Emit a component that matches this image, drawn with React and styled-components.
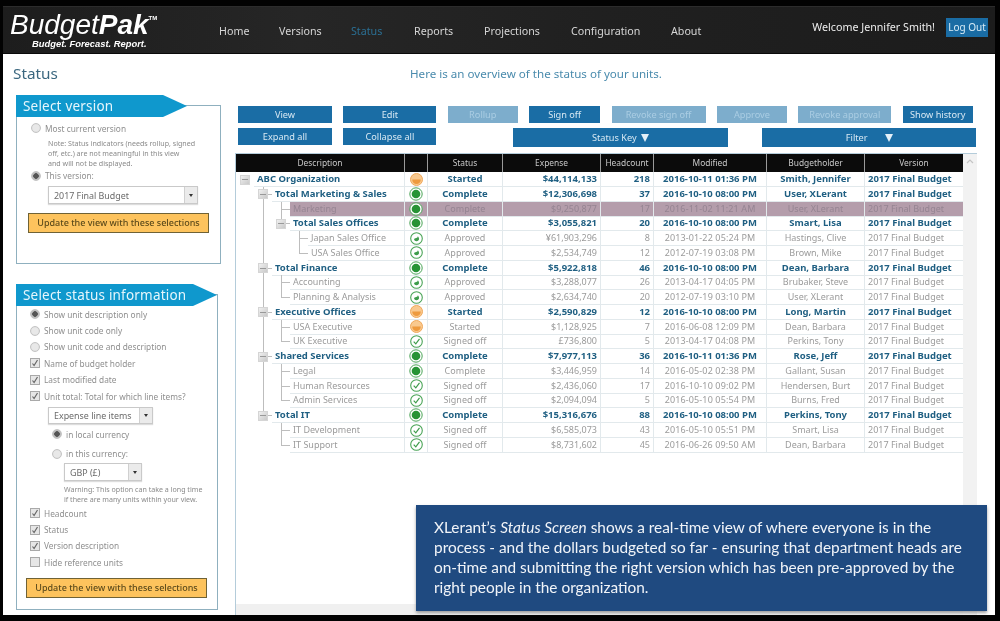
import React from "react";
import styled, { createGlobalStyle } from "styled-components";

const Global = createGlobalStyle`
  html, body { margin: 0; padding: 0; background: #000; }
  * { box-sizing: border-box; }
`;

const UI = `"Noto Sans", "Open Sans", sans-serif`;

const Screen = styled.div`
  position: relative;
  width: 1000px;
  height: 621px;
  overflow: hidden;
  background: #020202;
  padding: 6px 5px 6px 3px;
  font-family: ${UI};
  filter: blur(0.3px);
`;
const Page = styled.div`
  height: 100%;
  display: flex;
  flex-direction: column;
  background: #fff;
`;
const Header = styled.header`
  height: 48px;
  flex: none;
  display: flex;
  background: linear-gradient(90deg, #1d1d1d, #262626 30%, #202020 60%, #1c1c1c);
  border-top: 1px solid #2c2c2c;
  border-bottom: 1px solid #0a0a0a;
  color: #ddd;
`;
const Logo = styled.div`
  width: 216px;
  flex: none;
  padding: 4px 0 0 7px;
  color: #fff;
  font-family: "Liberation Sans", Arial, sans-serif;
  font-style: italic;
`;
const LogoMark = styled.div`
  font-size: 28px;
  line-height: 27px;
  b { font-weight: 700; }
  sup { font-size: 6px; font-style: normal; font-weight: 700; vertical-align: 14px; line-height: 0; }
`;
const LogoTag = styled.div`
  font-size: 9.4px;
  font-weight: 700;
  line-height: 12px;
  padding-left: 22px;
`;
const Nav = styled.nav`
  display: flex;
  align-items: center;
  height: 100%;
  padding-top: 2px;
`;
const NavItem = styled.a`
  font-size: 10.7px;
  width: ${(p) => p.$w}px;
  flex: none;
  color: ${(p) => (p.$active ? "#2b6f93" : "#d6d6d6")};
`;
const Welcome = styled.div`
  margin-left: auto;
  display: flex;
  align-items: flex-start;
  padding: 11px 7px 0 0;
  font-size: 10.7px;
  color: #eee;
  gap: 11px;
  line-height: 19px;
`;
const LogOut = styled.button`
  all: unset;
  width: 42px;
  height: 19px;
  background: #1a6ca4;
  color: #d9ecf7;
  font-size: 10px;
  text-align: center;
  line-height: 19px;
`;

const TitleRow = styled.div`
  height: 40px;
  flex: none;
  display: flex;
  align-items: center;
  padding: 0 0 2px 10px;
`;
const PageTitle = styled.h1`
  margin: 0;
  width: 390px;
  font-size: 15.3px;
  font-weight: 400;
  color: #3b677f;
`;
const Overview = styled.div`
  padding-left: 7px;
  font-size: 11.6px;
  color: #4a8bad;
`;

const Content = styled.div`
  flex: 1;
  min-height: 0;
  display: flex;
`;
const Sidebar = styled.aside`
  width: 232px;
  flex: none;
  padding-left: 13px;
  display: flex;
  flex-direction: column;
`;
const Panel = styled.section`
  width: ${(p) => p.$w}px;
  height: ${(p) => p.$h}px;
  margin-top: ${(p) => p.$top}px;
  border: 1px solid #8fb0bf;
`;
const Ribbon = styled.h2`
  margin: -11px 0 0 -1px;
  width: ${(p) => p.$w}px;
  height: 22px;
  background: #0f98cd;
  color: #e6f6fc;
  font-size: 13.5px;
  font-weight: 400;
  line-height: 22px;
  padding-left: 7px;
  letter-spacing: 0.2px;
  clip-path: polygon(0 0, calc(100% - 24px) 0, 100% 50%, calc(100% - 24px) 100%, 0 100%);
`;
const Options = styled.div`
  display: flex;
  flex-direction: column;
  padding: ${(p) => p.$pad};
`;
const Option = styled.label`
  height: ${(p) => p.$h || 16.4}px;
  display: flex;
  align-items: center;
  gap: 4px;
  margin-left: ${(p) => p.$indent || 0}px;
  font-size: 8.3px;
  color: #8f8f8f;
  white-space: nowrap;
`;
const Radio = styled.span`
  width: 10px;
  height: 10px;
  flex: none;
  border-radius: 50%;
  background: ${(p) =>
    p.$on
      ? "radial-gradient(circle, #555 0 2.5px, #bbb 3px, #ccc 100%)"
      : "radial-gradient(circle, #e8e8e8 0 3px, #d2d2d2 100%)"};
  border: 1px solid #c4c4c4;
`;
const Check = styled.span`
  width: 10px;
  height: 10px;
  flex: none;
  display: flex;
  align-items: center;
  justify-content: center;
  background: #e6e6e6;
  border: 1px solid #a9a9a9;
`;
const Note = styled.p`
  margin: ${(p) => p.$m};
  font-size: 7.1px;
  line-height: 9.8px;
  color: #8a8a8a;
`;
const Select = styled.div`
  width: ${(p) => p.$w}px;
  height: ${(p) => p.$h || 18}px;
  margin: ${(p) => p.$m};
  display: flex;
  align-items: center;
  justify-content: space-between;
  border: 1px solid #c9c9c9;
  box-shadow: 0 1px 1px #ddd;
  font-size: 8.9px;
  color: #6a6a6a;
  padding-left: 5px;
`;
const SelectArrow = styled.span`
  width: 13px;
  height: 100%;
  display: flex;
  align-items: center;
  justify-content: center;
  background: #ebebeb;
  border-left: 1px solid #d0d0d0;
  color: #333;
  &::after {
    content: "";
    border-left: 2.5px solid transparent;
    border-right: 2.5px solid transparent;
    border-top: 3px solid #333;
  }
`;
const Update = styled.button`
  all: unset;
  display: block;
  box-sizing: border-box;
  width: 181px;
  height: 20px;
  margin: ${(p) => p.$m};
  background: #fdc35d;
  border: 1px solid #6f6236;
  color: #5b4a1b;
  font-size: 9px;
  font-weight: 500;
  text-align: center;
  line-height: 18px;
`;

const Main = styled.main`
  flex: 1;
  min-width: 0;
  display: flex;
  flex-direction: column;
  padding-top: 12px;
`;
const ToolRow = styled.div`
  display: flex;
  gap: 11.4px;
  padding-left: 3px;
  margin-bottom: ${(p) => p.$mb}px;
`;
const Tool = styled.button`
  all: unset;
  box-sizing: border-box;
  flex: none;
  width: ${(p) => p.$w}px;
  height: ${(p) => p.$h || 17}px;
  margin-left: ${(p) => p.$ml || 0}px;
  background: ${(p) => (p.$off ? "#7dadcc" : "#1a6da5")};
  color: ${(p) => (p.$off ? "#aacde3" : "#d7e8f3")};
  font-size: 9.2px;
  text-align: center;
  line-height: ${(p) => (p.$h || 17) + 1}px;
`;
const Tri = styled.span`
  display: inline-block;
  margin-left: ${(p) => p.$ml}px;
  border-left: 4.5px solid transparent;
  border-right: 4.5px solid transparent;
  border-top: 8px solid #e4f0f8;
  vertical-align: -1px;
`;
const GridFrame = styled.div`
  width: 742px;
  height: 462px;
  flex: none;
  display: flex;
  border: 1px solid #b4ccda;
  border-bottom: 0;
`;
const GridBody = styled.div`
  width: 727px;
  flex: none;
  display: flex;
  flex-direction: column;
`;
const cols = "169px 23px 75px 98px 53px 113px 98px 98px";
const HeadRow = styled.div`
  display: grid;
  grid-template-columns: ${cols};
  height: 18px;
  background: #0b0b0b;
`;
const HeadCell = styled.div`
  color: #c9c9c9;
  font-size: 8.4px;
  text-align: center;
  line-height: 18px;
  border-right: 1px solid #9a9a9a;
  &:last-child { border-right: 0; }
`;
const Row = styled.div`
  display: grid;
  grid-template-columns: ${cols};
  height: 14.78px;
  font-size: ${(p) => (p.$bold ? 9.5 : 9)}px;
  line-height: 14px;
  color: ${(p) => (p.$bold ? "#1f5f82" : "#9b9b9b")};
  font-weight: ${(p) => (p.$bold ? 700 : 400)};
`;
const Tree = styled.div`
  display: flex;
  min-width: 0;
`;
const lineColor = "#bdbdbd";
const v = (h, y) => `linear-gradient(${lineColor},${lineColor}) 50% ${y} / 1px ${h} no-repeat`;
const hr = `linear-gradient(${lineColor},${lineColor}) 100% 50% / 50% 1px no-repeat`;
const guides = {
  ".": "none",
  "|": v("100%", "0"),
  T: `${v("100%", "0")}, ${hr}`,
  L: `${v("50%", "0")}, ${hr}`,
};
const Slot = styled.span`
  width: 18px;
  flex: none;
  display: flex;
  align-items: center;
  justify-content: center;
  background: ${(p) => guides[p.$g]};
`;
const Expander = styled.span`
  width: 10px;
  height: 10px;
  display: flex;
  align-items: center;
  justify-content: center;
  background: linear-gradient(135deg, #f0f0f0, #c9c9c9);
  border: 1px solid #d5d5d5;
  &::after { content: ""; width: 6px; height: 1px; background: #999; }
`;
const Label = styled.div`
  flex: 1;
  min-width: 0;
  padding-left: 3px;
  white-space: nowrap;
  overflow: hidden;
  border-bottom: 1px solid #e2e9ec;
  border-right: 1px solid #e2e9ec;
  background: ${(p) => (p.$hi ? "#b49dab" : "transparent")};
  color: ${(p) => (p.$hi ? "#958492" : "inherit")};
`;
const Cell = styled.div`
  border-bottom: 1px solid #e2e9ec;
  border-right: 1px solid #e2e9ec;
  text-align: ${(p) => p.$a || "center"};
  padding: 0 ${(p) => (p.$a === "right" ? 3 : 0)}px 0 ${(p) => (p.$a === "left" ? 3 : 0)}px;
  letter-spacing: ${(p) => p.$sp || 0}px;
  white-space: nowrap;
  overflow: hidden;
  background: ${(p) => (p.$hi ? "#b49dab" : "transparent")};
  color: ${(p) => (p.$hi ? "#958492" : "inherit")};
  &:last-child { border-right: 0; }
`;
const IconCell = styled(Cell)`
  display: flex;
  align-items: center;
  justify-content: center;
`;
const HScroll = styled.div`
  margin-top: auto;
  height: 11px;
  background: #f0f0f0;
`;
const VScroll = styled.div`
  width: 14px;
  flex: none;
  background: #f2f2f2;
  display: flex;
  justify-content: center;
  padding-top: 5px;
`;
const Callout = styled.aside`
  position: absolute;
  left: 416px;
  top: 505px;
  width: 571px;
  height: 106px;
  background: #1f4a80;
  box-shadow: 0 2px 3px rgba(120, 120, 120, 0.7);
  color: #f1f4f8;
  font-family: Lato, "Open Sans", sans-serif;
  font-size: 15.4px;
  line-height: 20px;
  padding: 12px 10px 0 18px;
  em { font-style: italic; }
`;

const StatusIcon = ({ s }) => {
  if (s === "Started")
    return (
      <svg width="13" height="13" viewBox="0 0 13 13">
        <circle cx="6.5" cy="6.5" r="6" fill="#f9c98f" stroke="#efa85a" />
        <path d="M2.2 6.6h8.6a4.3 4.3 0 0 1-8.6 0z" fill="#ee9a3e" />
      </svg>
    );
  if (s === "Complete")
    return (
      <svg width="14" height="14" viewBox="0 0 14 14">
        <circle cx="7" cy="7" r="6.2" fill="#fff" stroke="#4aa457" strokeWidth="1" />
        <circle cx="7" cy="7" r="4.3" fill="#279335" />
      </svg>
    );
  if (s === "Approved")
    return (
      <svg width="13" height="13" viewBox="0 0 13 13">
        <circle cx="6.5" cy="6.5" r="5.8" fill="#fff" stroke="#4aa457" strokeWidth="1.1" />
        <path d="M4 7.2a2.6 2.6 0 0 0 5 .4c.3-1-.2-2.4-1.2-3.4-.1 1.2-.6 1.6-1.6 1.7C5 6 4.4 6.4 4 7.2z" fill="#3e9c4b" />
      </svg>
    );
  return (
    <svg width="13" height="13" viewBox="0 0 13 13">
      <circle cx="6.5" cy="6.5" r="5.8" fill="#fff" stroke="#4aa457" strokeWidth="1.1" />
      <path d="M3.7 6.6l2.1 2.3 3.7-5" fill="none" stroke="#3e9c4b" strokeWidth="1.2" />
    </svg>
  );
};

const Tick = () => (
  <svg width="8" height="8" viewBox="0 0 8 8">
    <path d="M1.5 4.5l1.6 2L6.5 1" fill="none" stroke="#666" strokeWidth="1.2" />
  </svg>
);

const ROWS = [
  ["-", "ABC Organization", "Started", "$44,114,133", "218", "2016-10-11 01:36 PM", "Smith, Jennifer", 1],
  [".-", "Total Marketing & Sales", "Complete", "$12,306,698", "37", "2016-10-10 08:00 PM", "User, XLerant", 1],
  [".|T", "Marketing", "Complete", "$9,250,877", "17", "2016-11-02 11:21 AM", "User, XLerant", 0, 1],
  [".|=", "Total Sales Offices", "Complete", "$3,055,821", "20", "2016-10-10 08:00 PM", "Smart, Lisa", 1],
  [".|.T", "Japan Sales Office", "Approved", "¥61,903,296", "8", "2013-01-22 05:24 PM", "Hastings, Clive", 0],
  [".|.L", "USA Sales Office", "Approved", "$2,534,749", "12", "2012-07-19 03:08 PM", "Brown, Mike", 0],
  [".-", "Total Finance", "Complete", "$5,922,818", "46", "2016-10-10 08:00 PM", "Dean, Barbara", 1],
  [".|T", "Accounting", "Approved", "$3,288,077", "26", "2013-04-17 04:05 PM", "Brubaker, Steve", 0],
  [".|L", "Planning & Analysis", "Approved", "$2,634,740", "20", "2012-07-19 03:10 PM", "User, XLerant", 0],
  [".-", "Executive Offices", "Started", "$2,590,829", "12", "2016-10-10 08:00 PM", "Long, Martin", 1],
  [".|T", "USA Executive", "Started", "$1,128,925", "7", "2016-06-08 12:09 PM", "Dean, Barbara", 0],
  [".|L", "UK Executive", "Signed off", "£736,800", "5", "2013-04-17 04:08 PM", "Perkins, Tony", 0],
  [".-", "Shared Services", "Complete", "$7,977,113", "36", "2016-10-11 01:36 PM", "Rose, Jeff", 1],
  [".|T", "Legal", "Complete", "$3,446,959", "14", "2016-05-02 02:38 PM", "Gallant, Susan", 0],
  [".|T", "Human Resources", "Signed off", "$2,436,060", "17", "2016-10-10 09:02 PM", "Hendersen, Burt", 0],
  [".|L", "Admin Services", "Signed off", "$2,094,094", "5", "2016-05-10 05:54 PM", "Burns, Fred", 0],
  [".+", "Total IT", "Complete", "$15,316,676", "88", "2016-10-10 08:00 PM", "Perkins, Tony", 1],
  ["..T", "IT Development", "Signed off", "$6,585,073", "43", "2016-05-10 05:51 PM", "Smart, Lisa", 0],
  ["..L", "IT Support", "Signed off", "$8,731,602", "45", "2016-06-26 09:50 AM", "Dean, Barbara", 0],
];

const TreeSlots = ({ code }) =>
  [...code].map((c, i) => {
    if (c === "-" && i === 0) return <Slot key={i} $g="."><Expander /></Slot>;
    if (c === "-") return <Slot key={i} $g="T"><Expander /></Slot>;
    if (c === "=" || c === "+") return <Slot key={i} $g="L"><Expander /></Slot>;
    return <Slot key={i} $g={c} />;
  });

const GridRow = ({ r }) => {
  const [code, name, status, exp, hc, mod, holder, bold, hi] = r;
  return (
    <Row $bold={!!bold}>
      <Tree>
        <TreeSlots code={code} />
        <Label $hi={!!hi}>{name}</Label>
      </Tree>
      <IconCell $hi={!!hi}><StatusIcon s={status} /></IconCell>
      <Cell $hi={!!hi}>{status}</Cell>
      <Cell $hi={!!hi} $a="right">{exp}</Cell>
      <Cell $hi={!!hi} $a="right">{hc}</Cell>
      <Cell $hi={!!hi} $sp={bold ? 0 : 0.12}>{mod}</Cell>
      <Cell $hi={!!hi}>{holder}</Cell>
      <Cell $hi={!!hi} $a="left">2017 Final Budget</Cell>
    </Row>
  );
};

export default function App() {
  return (
    <Screen>
      <Global />
      <Page>
        <Header>
          <Logo>
            <LogoMark>Budget<b>Pak</b><sup>TM</sup></LogoMark>
            <LogoTag>Budget. Forecast. Report.</LogoTag>
          </Logo>
          <Nav>
            <NavItem $w={60}>Home</NavItem>
            <NavItem $w={72}>Versions</NavItem>
            <NavItem $w={63} $active>Status</NavItem>
            <NavItem $w={70}>Reports</NavItem>
            <NavItem $w={87}>Projections</NavItem>
            <NavItem $w={100}>Configuration</NavItem>
            <NavItem $w={40}>About</NavItem>
          </Nav>
          <Welcome>
            <span>Welcome Jennifer Smith!</span>
            <LogOut>Log Out</LogOut>
          </Welcome>
        </Header>
        <TitleRow>
          <PageTitle>Status</PageTitle>
          <Overview>Here is an overview of the status of your units.</Overview>
        </TitleRow>
        <Content>
          <Sidebar>
            <Panel $w={205} $h={159} $top={11}>
              <Ribbon $w={171}>Select version</Ribbon>
              <Options $pad="2px 0 0 14px">
                <Option $h={18}><Radio />Most current version</Option>
                <Note $m="2px 0 0 17px">
                  Note: Status indicators (needs rollup, signed<br />
                  off, etc.) are not meaningful in this view<br />
                  and will not be displayed.
                </Note>
                <Option $h={15}><Radio $on />This version:</Option>
                <Select $w={150} $m="3px 0 0 17px">2017 Final Budget<SelectArrow /></Select>
                <Update $m="9px 0 0 -3px">Update the view with these selections</Update>
              </Options>
            </Panel>
            <Panel $w={202} $h={316} $top={30}>
              <Ribbon $w={201}>Select status information</Ribbon>
              <Options $pad="0 0 0 13px">
                <Option><Radio $on />Show unit description only</Option>
                <Option><Radio />Show unit code only</Option>
                <Option><Radio />Show unit code and description</Option>
                <Option><Check><Tick /></Check>Name of budget holder</Option>
                <Option><Check><Tick /></Check>Last modified date</Option>
                <Option><Check><Tick /></Check>Unit total: Total for which line items?</Option>
                <Select $w={105} $h={17} $m="3px 0 0 18px">Expense line items<SelectArrow /></Select>
                <Option $h={20} $indent={22}><Radio $on />in local currency</Option>
                <Option $h={19} $indent={22}><Radio />in this currency:</Option>
                <Select $w={78} $m="0 0 0 34px">GBP (£)<SelectArrow /></Select>
                <Note $m="4px 0 0 34px">
                  Warning: This option can take a long time<br />
                  if there are many units within your view.
                </Note>
                <Option><Check><Tick /></Check>Headcount</Option>
                <Option><Check><Tick /></Check>Status</Option>
                <Option><Check><Tick /></Check>Version description</Option>
                <Option><Check />Hide reference units</Option>
                <Update $m="7px 0 0 -4px">Update the view with these selections</Update>
              </Options>
            </Panel>
          </Sidebar>
          <Main>
            <ToolRow $mb={5}>
              <Tool $w={94}>View</Tool>
              <Tool $w={93}>Edit</Tool>
              <Tool $w={70} $off>Rollup</Tool>
              <Tool $w={71}>Sign off</Tool>
              <Tool $w={94} $off>Revoke sign off</Tool>
              <Tool $w={70} $off>Approve</Tool>
              <Tool $w={93} $off>Revoke approval</Tool>
              <Tool $w={70}>Show history</Tool>
            </ToolRow>
            <ToolRow $mb={6}>
              <Tool $w={94}>Expand all</Tool>
              <Tool $w={93}>Collapse all</Tool>
              <Tool $w={215} $h={19} $ml={65}>Status Key<Tri $ml={4} /></Tool>
              <Tool $w={214} $h={19} $ml={23}>Filter<Tri $ml={17} /></Tool>
            </ToolRow>
            <GridFrame>
              <GridBody>
                <HeadRow>
                  <HeadCell>Description</HeadCell>
                  <HeadCell />
                  <HeadCell>Status</HeadCell>
                  <HeadCell>Expense</HeadCell>
                  <HeadCell>Headcount</HeadCell>
                  <HeadCell>Modified</HeadCell>
                  <HeadCell>Budgetholder</HeadCell>
                  <HeadCell>Version</HeadCell>
                </HeadRow>
                {ROWS.map((r) => <GridRow key={r[1]} r={r} />)}
                <HScroll />
              </GridBody>
              <VScroll>
                <svg width="8" height="5" viewBox="0 0 8 5"><path d="M1 4l3-3 3 3" fill="none" stroke="#c4c4c4" strokeWidth="1.2" /></svg>
              </VScroll>
            </GridFrame>
          </Main>
        </Content>
      </Page>
      <Callout>
        XLerant’s <em>Status Screen</em> shows a real-time view of where everyone is in the<br />
        process - and the dollars budgeted so far - ensuring that department heads are<br />
        on-time and submitting the right version which has been pre-approved by the<br />
        right people in the organization.
      </Callout>
    </Screen>
  );
}
